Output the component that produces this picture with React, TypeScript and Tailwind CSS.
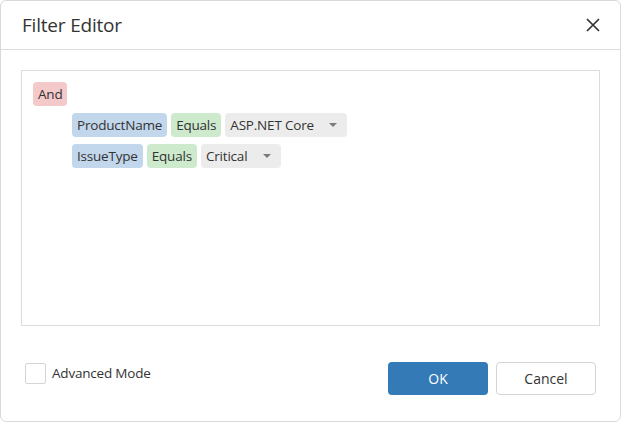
function Pill({ text, color }: { text: string; color: string }) {
  return (
    <span className={`flex h-6 items-center rounded px-[5px] ${color}`}>
      {text}
    </span>
  );
}

function ValueBox({ text, width }: { text: string; width: string }) {
  return (
    <span
      className={`flex h-6 items-center justify-between rounded bg-[#ececec] pl-[5px] pr-[10px] ${width}`}
    >
      {text}
      <svg width="8" height="4" viewBox="0 0 8 4">
        <path d="M0 0h8L4 4z" fill="#7a7a7a" />
      </svg>
    </span>
  );
}

const conditions = [
  { field: "ProductName", op: "Equals", value: "ASP.NET Core", width: "w-[122px]" },
  { field: "IssueType", op: "Equals", value: "Critical", width: "w-[80px]" },
];

export default function App() {
  return (
    <div
      className="h-[422px] w-[621px] bg-white text-[#333] text-[14px]"
      style={{ fontFamily: '"Open Sans", "Noto Sans", sans-serif' }}
    >
      <div className="flex h-full flex-col rounded-md border border-[#d9d9d9]">
        {/* header */}
        <div className="flex h-[49px] items-center justify-between border-b border-[#dcdcdc] pl-[21px] pr-[20px]">
          <span className="text-[19px] tracking-[-0.2px]">Filter Editor</span>
          <svg width="14" height="14" viewBox="0 0 14 14">
            <path d="M1 1l12 12M13 1L1 13" stroke="#333" strokeWidth="1.7" />
          </svg>
        </div>

        {/* body */}
        <div className="px-[20px] pt-[20px]">
          <div className="h-[256px] border border-[#dcdcdc] px-[11px] pt-[11px] text-[13.5px] tracking-[-0.2px]">
            <div className="flex">
              <Pill text="And" color="bg-[#f4c9c9]" />
            </div>
            <div className="mt-[7px] flex flex-col gap-[7px] pl-[39px]">
              {conditions.map((c) => (
                <div key={c.field} className="flex gap-1">
                  <Pill text={c.field} color="bg-[#c2d6ec]" />
                  <Pill text={c.op} color="bg-[#cdeacd]" />
                  <ValueBox text={c.value} width={c.width} />
                </div>
              ))}
            </div>
          </div>
        </div>

        {/* footer */}
        <div className="mt-auto flex items-start justify-between pb-[26px] pl-[24px] pr-[24px]">
          <label className="mt-[1px] flex items-center gap-[6px] text-[13.5px] tracking-[-0.2px]">
            <span className="block h-[21px] w-[21px] rounded-[2px] border border-[#d4d4d4] bg-white" />
            Advanced Mode
          </label>
          <div className="flex gap-2">
            <button className="h-[33px] w-[100px] rounded bg-[#337ab7] text-white">
              OK
            </button>
            <button className="h-[33px] w-[100px] rounded border border-[#d4d4d4] bg-white">
              Cancel
            </button>
          </div>
        </div>
      </div>
    </div>
  );
}
